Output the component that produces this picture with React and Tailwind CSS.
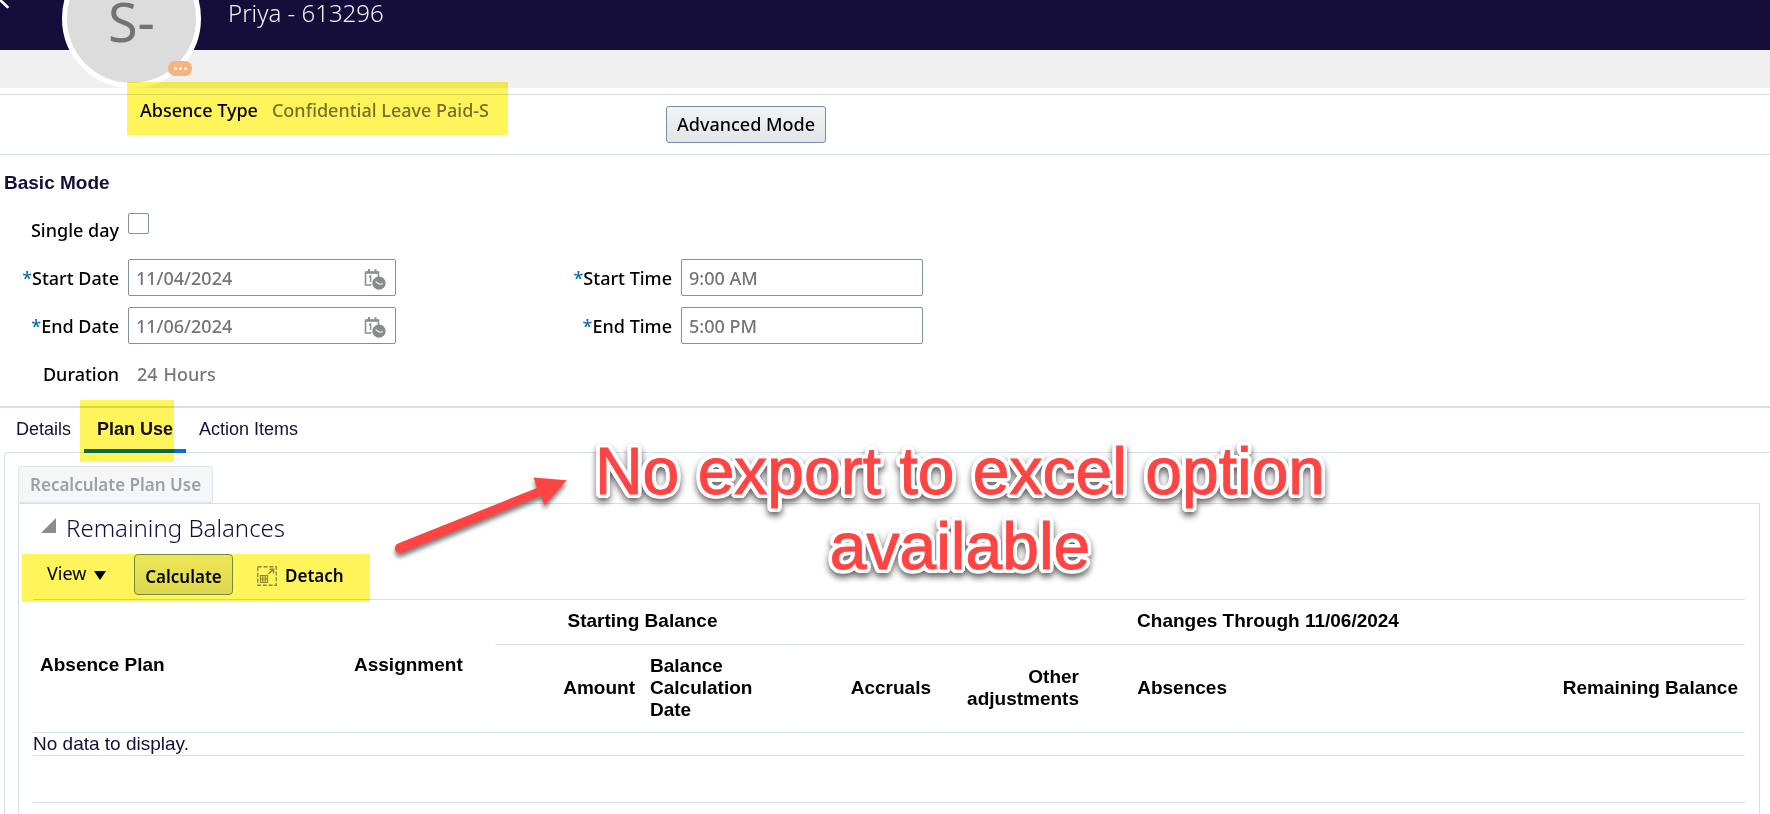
import React from "react";

function Highlight({ className }) {
  return (
    <span
      aria-hidden="true"
      className={`pointer-events-none absolute bg-[#fff45a] mix-blend-multiply ${className}`}
    />
  );
}

function CalendarClockIcon() {
  return (
    <svg width="22" height="22" viewBox="0 0 22 22" fill="none" aria-hidden="true">
      <path d="M1.5 4.5h13v5M1.5 4v13h6" stroke="#8b9194" strokeWidth="1.6" />
      <path d="M1 3.2h14v2.6H1z" fill="#8b9194" />
      <path d="M4 1h2v3H4zM10.500 1h2v3h-2z" fill="#8b9194" />
      <path d="M5 8.800l1.600-.8v6" stroke="#8b9194" strokeWidth="1.5" />
      <circle cx="15" cy="15.200" r="6.600" fill="#848a8d" />
      <path d="M11.500 13.500l3.800 2.600 3.700-.3" stroke="#e6e8e9" strokeWidth="1.300" />
    </svg>
  );
}

function DetachIcon() {
  return (
    <svg width="20" height="20" viewBox="0 0 20 20" fill="none" aria-hidden="true" stroke="#8a8f92">
      <rect x=".75" y=".75" width="18.500" height="18.500" strokeWidth="1.300" strokeDasharray="4 1.800" />
      <path d="M3.500 9.500h7v7h-7zM3.500 13h7M5.800 9.500v7M8.200 9.500v7" strokeWidth="1.200" />
      <path d="M11.500 8l4.500-4.500M12.500 3.200h4v4" strokeWidth="1.500" />
    </svg>
  );
}

function FieldLabel({ htmlFor, required, children }) {
  return (
    <label htmlFor={htmlFor} className="pt-[7px] text-right text-black">
      {required && <span className="text-[#0c67b4]">*</span>}
      {children}
    </label>
  );
}

const fieldBox =
  "h-[37px] w-full rounded-[2px] border border-[#7d929d] bg-white px-[7px] font-medium text-[#757575] outline-none";

function DateField({ id, value }) {
  return (
    <div className="relative">
      <input id={id} type="text" defaultValue={value} className={fieldBox} />
      <button type="button" aria-label="Select date" className="absolute top-[9px] right-[10px]">
        <CalendarClockIcon />
      </button>
    </div>
  );
}

const tab = "relative px-[13px] pt-2.5 text-[#150e3a]";
const line = "border-[#d6dfe6]";
const th = "border-b border-r border-b-[#d6dfe6] border-r-white px-[7px] pt-0 pb-0.5 font-bold";

export default function App() {
  return (
    <div className="relative flex min-h-screen flex-col overflow-hidden bg-white font-['Noto_Sans','Open_Sans',sans-serif] text-lg leading-6 font-medium text-black">
      <header className="relative h-[50px] bg-[#150e3a] pl-[228px]">
        <a href="#back" aria-label="Back" className="absolute top-0 left-0">
          <svg width="10" height="10" viewBox="0 0 10 10" aria-hidden="true">
            <path d="M-2-2L7.500 7" stroke="#fff" strokeWidth="2.600" strokeLinecap="round" />
          </svg>
        </a>
        <h1 className="text-2xl leading-[26px] font-light text-[#f1f1f5]">Priya - 613296</h1>
        <div className="absolute top-[-51px] left-[62px] flex size-[139px] items-center justify-center rounded-full border-[5px] border-white bg-[#dcdcdc] pt-2 pb-1">
          <span className="text-[54px] leading-[60px] font-normal text-[#737373]">S-</span>
          <button
            type="button"
            aria-label="More actions"
            className="absolute right-1 bottom-[7px] flex h-[15px] w-6 items-center justify-center gap-[2px] rounded-[7px] bg-[#f8b27e]"
          >
            <i className="size-[3px] rounded-full bg-white" />
            <i className="size-[3px] rounded-full bg-white" />
            <i className="size-[3px] rounded-full bg-white" />
          </button>
        </div>
      </header>
      <div className="h-[38px] bg-[#f0f0f0]" />

      <section className={`mt-1.5 flex h-[61px] items-start border-y ${line}`}>
        <div className="w-[666px] pt-[3px] pl-[140px]">
          <dl className="relative flex w-max gap-3.5">
            <dt>Absence Type</dt>
            <dd className="text-[#767676]">Confidential Leave Paid-S</dd>
            <Highlight className="top-[-16px] left-[-13px] h-[53px] w-[381px]" />
          </dl>
        </div>
        <button
          type="button"
          className="mt-[11px] h-[37px] w-40 rounded-[3px] border border-[#7390a8] bg-linear-to-b from-[#f2f3f5] to-[#e2e5e8] pb-0.5"
        >
          Advanced Mode
        </button>
      </section>

      <section className={`border-b-2 pt-[17px] pb-3.5 ${line}`}>
        <h2 className="pl-1 font-['Liberation_Sans',Arial,sans-serif] text-[19px] leading-[22px] font-bold text-[#150e3a]">
          Basic Mode
        </h2>
        <form className="mt-[17px] grid auto-rows-[37px] grid-cols-[119px_268px_267px_242px] gap-x-[9px] gap-y-[11px]">
          <FieldLabel htmlFor="single">Single day</FieldLabel>
          <div className="col-span-3 pt-0.5">
            <input
              id="single"
              type="checkbox"
              className="block size-[21px] appearance-none rounded-[2px] border border-[#7d929d] bg-white"
            />
          </div>
          <FieldLabel htmlFor="sd" required>Start Date</FieldLabel>
          <DateField id="sd" value="11/04/2024" />
          <FieldLabel htmlFor="st" required>Start Time</FieldLabel>
          <input id="st" type="text" defaultValue="9:00 AM" className={fieldBox} />
          <FieldLabel htmlFor="ed" required>End Date</FieldLabel>
          <DateField id="ed" value="11/06/2024" />
          <FieldLabel htmlFor="et" required>End Time</FieldLabel>
          <input id="et" type="text" defaultValue="5:00 PM" className={fieldBox} />
          <span className="pt-[7px] text-right">Duration</span>
          <output className="flex gap-1.5 pt-[7px] pl-[9px] text-[#767676]">
            <span>24</span>
            <span>Hours</span>
          </output>
        </form>
      </section>

      <nav className="relative flex items-start pl-[3px] font-['Liberation_Sans',Arial,sans-serif] text-lg leading-[22px] font-normal">
        <button type="button" className={`${tab} pb-[13px]`}>Details</button>
        <button type="button" className={`${tab} border-b-4 border-[#0a6ccf] pb-[9px] font-bold`}>
          Plan Use
          <Highlight className="top-[-8px] left-[-4px] h-[62px] w-[94px]" />
        </button>
        <button type="button" className={`${tab} pb-[13px]`}>Action Items</button>
      </nav>

      <main className={`-mt-px ml-1 flex grow flex-col rounded-tl-[4px] border-t border-l pt-[13px] pr-2.5 pl-[13px] ${line}`}>
        <div>
          <button
            type="button"
            disabled
            className="block h-[37px] rounded-[3px] border border-[#dfe5ea] bg-[#f4f6f8] px-[11px] text-[17px] font-semibold text-[#a0a0a0]"
          >
            Recalculate Plan Use
          </button>
        </div>
        <section className={`grow border-x border-t pt-2 ${line}`}>
          <h2 className="flex gap-2.5 pl-[22px] text-2xl leading-8 font-light text-[#150e3a]">
            <svg width="15" height="15" viewBox="0 0 15 15" className="mt-1.5" aria-hidden="true">
              <path d="M15 0v15H0z" fill="#888d90" />
            </svg>
            Remaining Balances
          </h2>
          <div className="relative mt-2.5 flex h-[45px] items-start pl-7">
            <button type="button" className="flex w-[87px] items-center gap-2 pt-[7px] font-normal">
              View
              <svg width="12" height="9" viewBox="0 0 12 9" className="mt-1" aria-hidden="true">
                <path d="M0 0h12L6 9z" />
              </svg>
            </button>
            <button
              type="button"
              className="h-[41px] w-[99px] rounded-[4px] border border-[#7390a8] bg-linear-to-b from-[#eef0f1] to-[#dfe2e4] pt-1 text-[17px] font-semibold"
            >
              Calculate
            </button>
            <button type="button" className="ml-6 flex items-center gap-2 pt-2.5 text-[17px] font-semibold">
              <DetachIcon />
              Detach
            </button>
            <Highlight className="top-0 left-[3px] h-12 w-[348px]" />
          </div>
          <div className={`mx-3.5 border-t font-['Liberation_Sans',Arial,sans-serif] text-[19px] leading-[22px] font-normal ${line}`}>
            <table className="w-full table-fixed border-separate border-spacing-0">
              <colgroup>
                <col className="w-[314px]" />
                <col className="w-[148px]" />
                <col className="w-[148px]" />
                <col className="w-[148px]" />
                <col className="w-[148px]" />
                <col className="w-[148px]" />
                <col className="w-[148px]" />
                <col />
              </colgroup>
              <thead>
                <tr className="h-[45px]">
                  <th rowSpan={2} className={`${th} text-left`}>Absence Plan</th>
                  <th rowSpan={2} className={`${th} text-left`}>Assignment</th>
                  <th colSpan={2} className={`${th} text-center`}>Starting Balance</th>
                  <th colSpan={4} className={`${th} border-r-0 text-center`}>Changes Through 11/06/2024</th>
                </tr>
                <tr className="h-[88px]">
                  <th className={`${th} text-right`}>Amount</th>
                  <th className={`${th} text-left`}>Balance Calculation Date</th>
                  <th className={`${th} text-right`}>Accruals</th>
                  <th className={`${th} text-right`}>Other adjustments</th>
                  <th className={`${th} text-right`}>Absences</th>
                  <th className={`${th} border-r-0 text-right`}>Remaining Balance</th>
                </tr>
              </thead>
              <tbody>
                <tr>
                  <td colSpan={8} className={`border-b p-0 text-[#150e3a] ${line}`}>No data to display.</td>
                </tr>
              </tbody>
            </table>
            <div className={`h-[47px] border-b ${line}`} />
          </div>
        </section>
      </main>

      <svg
        width="190"
        height="100"
        viewBox="385 465 190 100"
        aria-hidden="true"
        className="pointer-events-none absolute top-[465px] left-[385px] drop-shadow-[0_4px_2px_rgba(0,0,0,0.5)]"
      >
        <path
          d="M398 543.500L537 488l-3.500-10.500 33.200 2.800L544.500 505l-3.500-9.500L402 552.800a5 5 0 0 1-4-9.300z"
          fill="#ff4444"
        />
      </svg>
      <p className="pointer-events-none absolute top-[434px] left-[580px] w-[760px] text-center font-['Liberation_Sans',Arial,sans-serif] text-[66px] leading-[75px] font-normal text-[#ff4444] drop-shadow-[0_4px_3px_rgba(0,0,0,0.6)] [-webkit-text-stroke:1px_#ff4444] [text-shadow:4px_0_#fff,-4px_0_#fff,0_4px_#fff,0_-4px_#fff,3px_3px_#fff,-3px_3px_#fff,3px_-3px_#fff,-3px_-3px_#fff,4px_2px_#fff,-4px_2px_#fff,4px_-2px_#fff,-4px_-2px_#fff,2px_4px_#fff,-2px_4px_#fff,2px_-4px_#fff,-2px_-4px_#fff]">
        No export to excel option available
      </p>
    </div>
  );
}
